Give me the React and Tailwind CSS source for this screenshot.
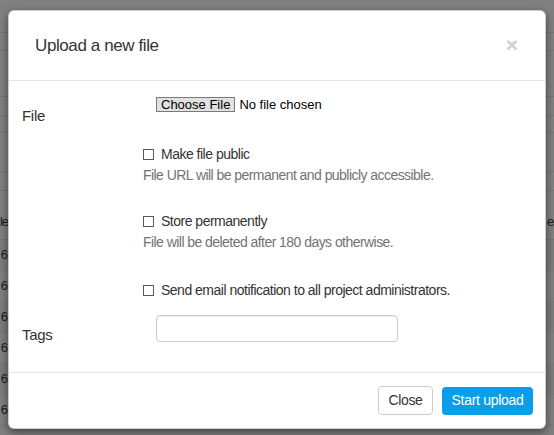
import React from 'react';

const options = [
  { label: 'Make file public', help: 'File URL will be permanent and publicly accessible.', gap: 'mt-[19px]' },
  { label: 'Store permanently', help: 'File will be deleted after 180 days otherwise.', gap: 'mt-[28px]' },
  { label: 'Send email notification to all project administrators.', gap: 'mt-[30px]' },
];

const Checkbox = ({ label }) => (
  <label className="flex items-center gap-[7px] h-[18px] text-[14px] leading-[18px] tracking-[-0.5px] text-[#333]">
    <span className="w-[11px] h-[11px] border border-[#5a5a5a] bg-white shrink-0" />
    <span>{label}</span>
  </label>
);

// the page behind the dimmed backdrop, only its edges show
const BackdropPage = () => {
  const lines = [33, 18, 46, 19, 17, 39, 19];
  const rows = [0, 1, 2, 3, 4, 5];
  return (
    <div className="flex flex-col w-full">
      {lines.map((h, i) => (
        <div key={i} style={{ height: h }} className="border-b border-[#747474]" />
      ))}
      <div className="flex justify-between h-[49px] items-end pb-[8px] border-b border-[#747474] text-[13px] text-[#1a1a1a]">
        <div className="w-[8px] flex justify-end tracking-[-1px]"><span>le</span></div>
        <div className="w-[8px] pl-[1px]"><span>e</span></div>
      </div>
      {rows.map((r) => (
        <div
          key={r}
          className={`flex items-center h-[31px] border-b border-[#777] text-[13px] text-[#1a1a1a] ${r % 2 === 0 ? 'bg-[#7c7c7c]' : 'bg-[#808080]'}`}
        >
          <div className="w-[8px] flex justify-end"><span>6</span></div>
        </div>
      ))}
    </div>
  );
};

export default function App() {
  return (
    <div className="relative w-[554px] h-[435px] overflow-hidden bg-[#808080] font-['Liberation_Sans',Arial,sans-serif]">
      <BackdropPage />

      <div className="absolute left-[8px] top-[10px] w-[538px] h-[419px] bg-white rounded-[6px] border border-black/20 shadow-[0_3px_9px_rgba(0,0,0,0.5)] flex flex-col">
        <div className="h-[70px] flex items-center justify-between pl-[26px] pr-[27px] border-b border-[#e5e5e5]">
          <h4 className="text-[17px] tracking-[-0.4px] text-[#333]">Upload a new file</h4>
          <button className="text-[21px] font-bold leading-none text-[#cfcfcf] -mt-[3px]">×</button>
        </div>

        <div className="h-[291px]">
          <div className="flex">
            <div className="w-[147px] pl-[13px] pt-[25px] text-[15px] leading-5 tracking-[-0.3px] text-[#333]">File</div>
            <div className="pt-[16px]">
              <div className="flex items-center gap-[4px] text-[13px] leading-[13px] text-black">
                <span className="h-[15px] px-[4px] flex items-center bg-[#e1e1e1] border border-[#7a7a7a]">Choose File</span>
                <span>No file chosen</span>
              </div>
            </div>
          </div>

          <div className="pl-[134px]">
            {options.map((o) => (
              <div key={o.label} className={o.gap}>
                <Checkbox label={o.label} />
                {o.help && (
                  <p className="mt-[3px] text-[14px] leading-[18px] tracking-[-0.55px] text-[#737373]">{o.help}</p>
                )}
              </div>
            ))}
          </div>

          <div className="flex items-start mt-[16px]">
            <div className="w-[147px] pl-[13px] pt-[10px] text-[15px] leading-5 tracking-[-0.3px] text-[#333]">Tags</div>
            <input
              type="text"
              className="w-[242px] h-[27px] rounded-[4px] border border-[#ccc] shadow-[inset_0_1px_1px_rgba(0,0,0,0.075)] outline-none"
            />
          </div>
        </div>

        <div className="flex-1 border-t border-[#e5e5e5] flex items-center justify-end gap-[9px] pr-[12px]">
          <button className="w-[55px] h-[29px] rounded-[4px] border border-[#ccc] bg-white text-[14px] tracking-[-0.4px] text-[#333]">
            Close
          </button>
          <button className="w-[91px] h-[28px] rounded-[4px] bg-[#0a9dec] text-[14px] tracking-[-0.3px] text-white">
            Start upload
          </button>
        </div>
      </div>
    </div>
  );
}
